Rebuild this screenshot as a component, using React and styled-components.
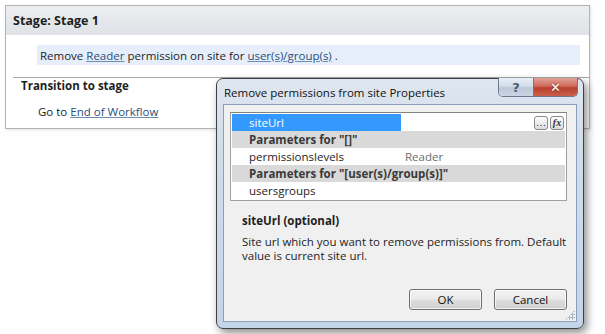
import React from 'react';
import styled, { createGlobalStyle } from 'styled-components';

const Global = createGlobalStyle`
  body {
    margin: 0;
    background: #fff;
    font-family: "Open Sans", "Noto Sans", sans-serif;
    font-size: 11.5px;
    color: #1e1e1e;
  }
`;

const Page = styled.div`
  position: relative;
  width: 605px;
  height: 334px;
  overflow: hidden;
  padding: 5px 0 0 5px;
  box-sizing: border-box;
`;

const StagePanel = styled.div`
  width: 585px;
  height: 124px;
  border: 1px solid #b4b4b4;
  box-sizing: border-box;
  box-shadow: 1px 1px 3px rgba(0, 0, 0, 0.12);
`;

const StageHeader = styled.div`
  height: 29px;
  display: flex;
  align-items: center;
  padding-left: 7px;
  background: linear-gradient(#eceef1, #dfe2e6);
  font-weight: 700;
  font-size: 12.5px;
`;

const ActionRow = styled.div`
  margin: 10px 9px 0 31px;
  height: 20px;
  display: flex;
  align-items: center;
  padding-left: 3px;
  background: #e5eefa;
`;

const Link = styled.span`
  color: #2b4f7c;
  text-decoration: underline;
  text-decoration-color: #6e8bb0;
`;

const Section = styled.div`
  margin: 12px 0 0 7px;
  border-top: 1px solid #a8a8a8;
`;

const SectionTitle = styled.div`
  font-weight: 700;
  padding: 0 0 0 8px;
  height: 18px;
`;

const Step = styled.div`
  padding: 8px 0 0 25px;
`;

const Dialog = styled.div`
  position: absolute;
  left: 216px;
  top: 78px;
  width: 368px;
  height: 251px;
  box-sizing: border-box;
  border: 1px solid #3c3f44;
  border-radius: 7px;
  background: linear-gradient(#dfe6ef, #d0dcea 30%, #c4d5ea);
  box-shadow: 3px 4px 8px rgba(0, 0, 0, 0.45);
  display: flex;
  flex-direction: column;
  padding: 0 6px 6px 6px;
`;

const TitleBar = styled.div`
  height: 25px;
  display: flex;
  align-items: center;
  justify-content: space-between;
  padding-left: 1px;
`;

const TitleText = styled.div`
  font-size: 11.5px;
  color: #111;
  padding-top: 1px;
`;

const Caption = styled.div`
  display: flex;
  align-self: flex-start;
  margin-top: -1px;
  margin-right: -1px;
  border: 1px solid #6a7b90;
  border-top: none;
  border-radius: 0 0 5px 5px;
  overflow: hidden;
`;

const CaptionButton = styled.div`
  width: ${p => p.$w}px;
  height: 18px;
  display: flex;
  align-items: center;
  justify-content: center;
  font-weight: 700;
  font-size: 13px;
  font-family: "DejaVu Sans", sans-serif;
  color: ${p => (p.$close ? '#fff' : '#4c5e73')};
  background: ${p =>
    p.$close
      ? 'linear-gradient(#e3a397, #cf6a5a 45%, #b8402e 55%, #c9604c)'
      : 'linear-gradient(#e9eef5, #d3dce8 45%, #bac8d9 55%, #cbd6e3)'};
  border-left: ${p => (p.$close ? '1px solid #6a7b90' : 'none')};
  text-shadow: ${p => (p.$close ? '0 0 2px #7a1d10' : 'none')};
`;

const Client = styled.div`
  flex: 1;
  background: #f0f0f0;
  border: 1px solid #8ba0bc;
  display: flex;
  flex-direction: column;
  padding: 7px 9px 5px 6px;
  position: relative;
`;

const Grid = styled.div`
  border: 1px solid #a0a0a0;
  border-top-color: #828282;
  background: #fff;
  padding: 1px;
  height: 89px;
  box-sizing: border-box;
`;

const Row = styled.div`
  height: 17px;
  display: flex;
  align-items: center;
  background: ${p => (p.$category ? '#d9d9d9' : '#fff')};
  font-weight: ${p => (p.$category ? 700 : 400)};
  color: ${p => (p.$category ? '#3a3a3a' : '#1e1e1e')};
`;

const Label = styled.div`
  width: 169px;
  height: 100%;
  box-sizing: border-box;
  display: flex;
  align-items: center;
  padding-left: 17px;
  background: ${p => (p.$selected ? '#3399ff' : 'transparent')};
  color: ${p => (p.$selected ? '#fff' : 'inherit')};
  white-space: nowrap;
`;

const Value = styled.div`
  flex: 1;
  display: flex;
  align-items: center;
  padding-left: 4px;
  color: #6d6d6d;
`;

const Tools = styled.div`
  margin-left: auto;
  display: flex;
  gap: 2px;
  padding-right: 1px;
`;

const Tool = styled.div`
  width: 14px;
  height: 14px;
  border: 1px solid #8a8a8a;
  border-radius: 3px;
  background: linear-gradient(#fdfdfd, #dcdcdc);
  display: flex;
  align-items: center;
  justify-content: center;
  font-size: 10px;
  line-height: 1;
  color: #333;
  box-sizing: border-box;
  font-family: "Liberation Serif", serif;
  font-style: ${p => (p.$italic ? 'italic' : 'normal')};
  font-weight: ${p => (p.$italic ? 700 : 400)};
`;

const Description = styled.div`
  padding: 12px 0 0 12px;
`;

const DescTitle = styled.div`
  font-weight: 700;
  margin-bottom: 7px;
`;

const DescText = styled.div`
  line-height: 14px;
`;

const Footer = styled.div`
  margin-top: auto;
  display: flex;
  justify-content: flex-end;
  gap: 12px;
  margin-bottom: 6px;
`;

const Button = styled.div`
  width: 73px;
  height: 21px;
  box-sizing: border-box;
  border: 1px solid #707070;
  border-radius: 3px;
  display: flex;
  align-items: center;
  justify-content: center;
  background: linear-gradient(#f2f2f2, #ebebeb 45%, #dddddd 55%, #cfcfcf);
  box-shadow: inset 0 0 0 1px rgba(255, 255, 255, 0.7);
  color: #111;
`;

const Grip = styled.div`
  position: absolute;
  right: 1px;
  bottom: 1px;
  width: 10px;
  height: 10px;
  background-image: radial-gradient(circle, #a9b6c6 1px, transparent 1.2px);
  background-size: 3px 3px;
  clip-path: polygon(100% 0, 100% 100%, 0 100%);
`;

export default function App() {
  return (
    <Page>
      <Global />
      <StagePanel>
        <StageHeader>Stage: Stage 1</StageHeader>
        <ActionRow>
          <span>
            Remove <Link>Reader</Link> permission on site for <Link>user(s)/group(s)</Link> .
          </span>
        </ActionRow>
        <Section>
          <SectionTitle>Transition to stage</SectionTitle>
          <Step>
            Go to <Link>End of Workflow</Link>
          </Step>
        </Section>
      </StagePanel>

      <Dialog>
        <TitleBar>
          <TitleText>Remove permissions from site Properties</TitleText>
          <Caption>
            <CaptionButton $w={34}>?</CaptionButton>
            <CaptionButton $w={43} $close>✕</CaptionButton>
          </Caption>
        </TitleBar>
        <Client>
          <Grid>
            <Row>
              <Label $selected>siteUrl</Label>
              <Value>
                <Tools>
                  <Tool>…</Tool>
                  <Tool $italic>fx</Tool>
                </Tools>
              </Value>
            </Row>
            <Row $category>
              <Label>Parameters for "[]"</Label>
            </Row>
            <Row>
              <Label>permissionslevels</Label>
              <Value>Reader</Value>
            </Row>
            <Row $category>
              <Label>Parameters for "[user(s)/group(s)]"</Label>
            </Row>
            <Row>
              <Label>usersgroups</Label>
            </Row>
          </Grid>
          <Description>
            <DescTitle>siteUrl (optional)</DescTitle>
            <DescText>
              Site url which you want to remove permissions from. Default
              <br />
              value is current site url.
            </DescText>
          </Description>
          <Footer>
            <Button>OK</Button>
            <Button>Cancel</Button>
          </Footer>
          <Grip />
        </Client>
      </Dialog>
    </Page>
  );
}
